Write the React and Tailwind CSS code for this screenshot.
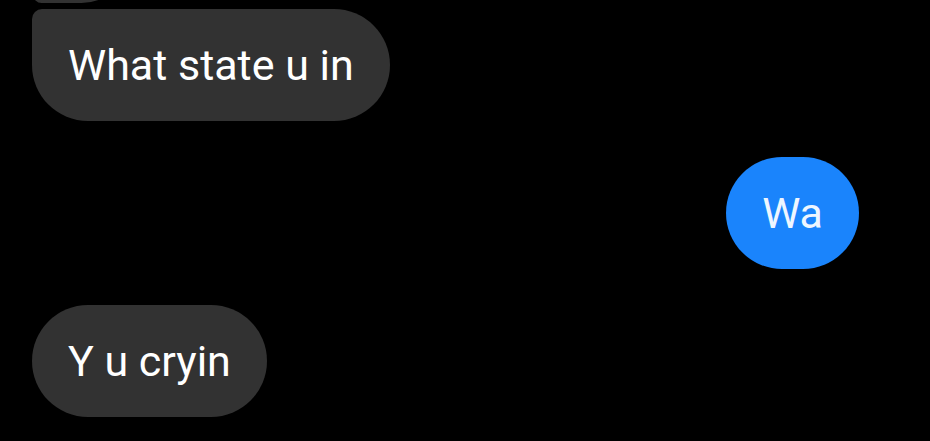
const Bubble = ({ text, className = "" }) => (
  <div
    className={`h-[112px] flex items-center px-[36px] text-[43px] leading-none ${className}`}
  >
    {text}
  </div>
);

export default function App() {
  return (
    <div
      className="w-[930px] h-[441px] bg-black overflow-hidden flex flex-col"
      style={{ fontFamily: "Roboto, 'Noto Sans', sans-serif" }}
    >
      {/* previous message, cut off at the top */}
      <div className="ml-[33px] mt-[-109px] w-[97px] h-[112px] shrink-0 bg-[#323232] rounded-bl-[10px] rounded-r-[56px] rounded-tl-[56px]" />

      <div className="mt-[6px] px-[32px] flex">
        <Bubble
          text="What state u in"
          className="bg-[#323232] text-white rounded-tl-[10px] rounded-bl-[56px] rounded-r-[56px]"
        />
      </div>

      <div className="mt-[36px] pr-[71px] flex justify-end">
        <Bubble
          text="Wa"
          className="bg-[#1a84fc] text-[#eef6ff] rounded-[56px] px-[35px]"
        />
      </div>

      <div className="mt-[36px] px-[32px] flex">
        <Bubble
          text="Y u cryin"
          className="bg-[#323232] text-white rounded-[56px]"
        />
      </div>
    </div>
  );
}
